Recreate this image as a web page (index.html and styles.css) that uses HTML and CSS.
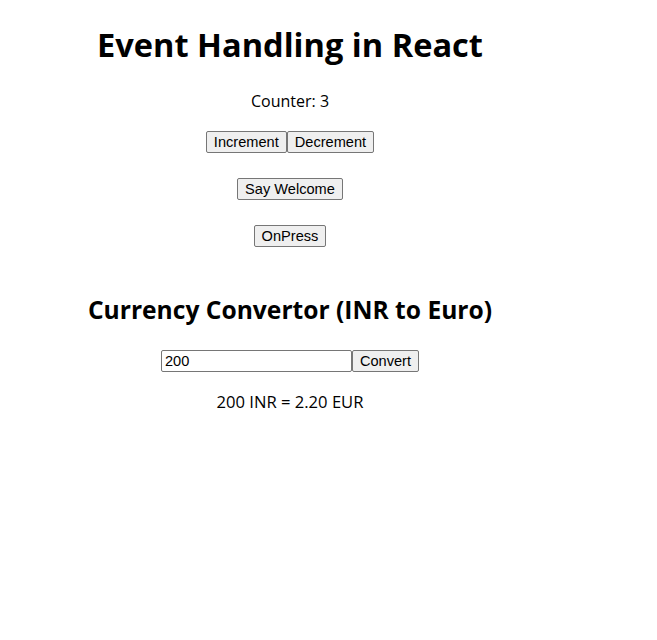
FILE: index.html
```html
<!DOCTYPE html>
<html>
<head>
<meta charset="utf-8">
<link rel="stylesheet" href="styles.css">
</head>
<body>
<div class="app">
  <h1 class="title">Event Handling in React</h1>
  <p class="counter">Counter: 3</p>
  <div class="row"><button class="btn">Increment</button><button class="btn">Decrement</button></div>
  <div class="row"><button class="btn">Say Welcome</button></div>
  <div class="row"><button class="btn">OnPress</button></div>
  <h2 class="subtitle">Currency Convertor (INR to Euro)</h2>
  <div class="row"><input class="field" type="text" value="200"><button class="btn">Convert</button></div>
  <p class="result">200 INR = 2.20 EUR</p>
</div>
</body>
</html>
```
FILE: styles.css
```css
html, body {
  margin: 0;
  padding: 0;
  background: #fff;
}
.app {
  width: 564px;
  margin-left: 8px;
  text-align: center;
  font-family: "Open Sans", "Noto Sans", sans-serif;
  color: #000;
  padding-top: 1px;
}
.title {
  font-size: 32.6px;
  font-weight: 700;
  margin: 21px 0 0;
  line-height: 46px;
}
.counter {
  font-size: 16px;
  margin: 22px 0 0;
  line-height: 22px;
}
.row {
  display: flex;
  justify-content: center;
  margin-top: 25px;
}
.row + .row { margin-top: 25px; }
.counter + .row { margin-top: 19px; }
.btn {
  font-family: "Liberation Sans", Arial, sans-serif;
  font-size: 14.6px;
  height: 22px;
  padding: 0 7px;
  border: 1px solid #767676;
  border-radius: 2px;
  background: #efefef;
  color: #000;
  margin: 0;
  line-height: 18px;
}
.subtitle {
  font-size: 24.6px;
  font-weight: 700;
  margin: 45px 0 0;
  line-height: 36px;
}
.subtitle + .row { margin-top: 22px; }
.field {
  width: 191px;
  height: 22px;
  box-sizing: border-box;
  border: 1px solid #767676;
  border-radius: 2px;
  padding: 1px 3px;
  font-family: "Liberation Sans", Arial, sans-serif;
  font-size: 14.6px;
  margin: 0;
}
.result {
  font-size: 16.6px;
  margin: 19px 0 0;
  line-height: 22px;
}
```
